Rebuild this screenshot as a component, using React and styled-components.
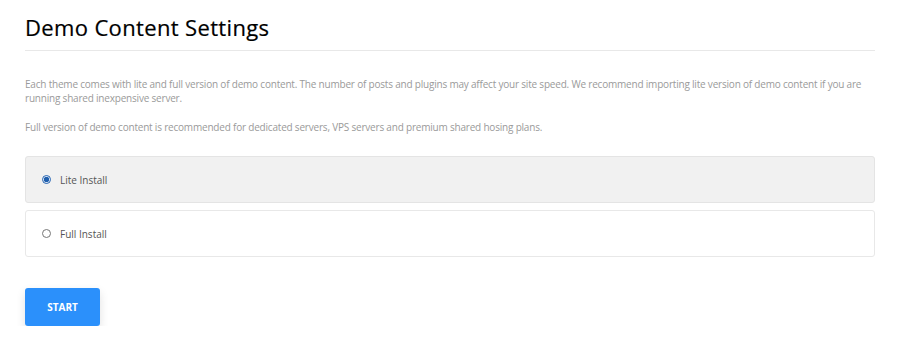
import React, { useState } from "react";
import styled, { createGlobalStyle } from "styled-components";

const GlobalStyle = createGlobalStyle`
  html, body {
    margin: 0;
    padding: 0;
    background: #ffffff;
  }

  body {
    font-family: "Open Sans", "Liberation Sans", sans-serif;
  }
`;

const Page = styled.div`
  padding: 12px 25px 0 25px;
`;

const Title = styled.h1`
  margin: 0;
  padding-bottom: 8px;
  font-size: 22px;
  font-weight: 500;
  letter-spacing: 0.35px;
  color: #000;
  -webkit-text-stroke: 0.2px #000;
  border-bottom: 1px solid #e8e8e8;
`;

const Intro = styled.div`
  margin-top: 26px;
`;

const Paragraph = styled.p`
  margin: 0 0 15px 0;
  font-size: 10px;
  line-height: 14px;
  letter-spacing: -0.2px;
  color: #9a9a9a;
`;

const Options = styled.div`
  display: flex;
  flex-direction: column;
  gap: 7px;
  margin-top: 22px;
`;

const Option = styled.label`
  display: flex;
  align-items: center;
  gap: 9px;
  height: 45px;
  padding: 0 16px;
  border: 1px solid ${(p) => (p.$active ? "#e4e4e4" : "#e8e8e8")};
  border-radius: 3px;
  background: ${(p) => (p.$active ? "#f1f1f1" : "#ffffff")};
  cursor: pointer;
`;

const Radio = styled.input`
  margin: 0;
  width: 9px;
  height: 9px;
  accent-color: #1f5fae;
`;

const OptionLabel = styled.span`
  font-size: 10px;
  color: #555;
`;

const StartButton = styled.button`
  margin-top: 31px;
  width: 75px;
  height: 38px;
  border: none;
  border-radius: 3px;
  background: #2b90fb;
  color: #fff;
  font-family: "Open Sans", "Liberation Sans", sans-serif;
  font-size: 10px;
  font-weight: 700;
  box-shadow: 0 4px 10px rgba(0, 0, 0, 0.12);
  cursor: pointer;
`;

const installs = [
  { id: "lite", label: "Lite Install" },
  { id: "full", label: "Full Install" }
];

export default function App() {
  const [selected, setSelected] = useState("lite");

  return (
    <Page>
      <GlobalStyle />
      <Title>Demo Content Settings</Title>
      <Intro>
        <Paragraph>
          Each theme comes with lite and full version of demo content. The
          number of posts and plugins may affect your site speed. We recommend
          importing lite version of demo content if you are running shared
          inexpensive server.
        </Paragraph>
        <Paragraph>
          Full version of demo content is recommended for dedicated servers,
          VPS servers and premium shared hosing plans.
        </Paragraph>
      </Intro>
      <Options>
        {installs.map((item) => (
          <Option key={item.id} $active={selected === item.id}>
            <Radio
              type="radio"
              name="install"
              checked={selected === item.id}
              onChange={() => setSelected(item.id)}
            />
            <OptionLabel>{item.label}</OptionLabel>
          </Option>
        ))}
      </Options>
      <StartButton>START</StartButton>
    </Page>
  );
}
